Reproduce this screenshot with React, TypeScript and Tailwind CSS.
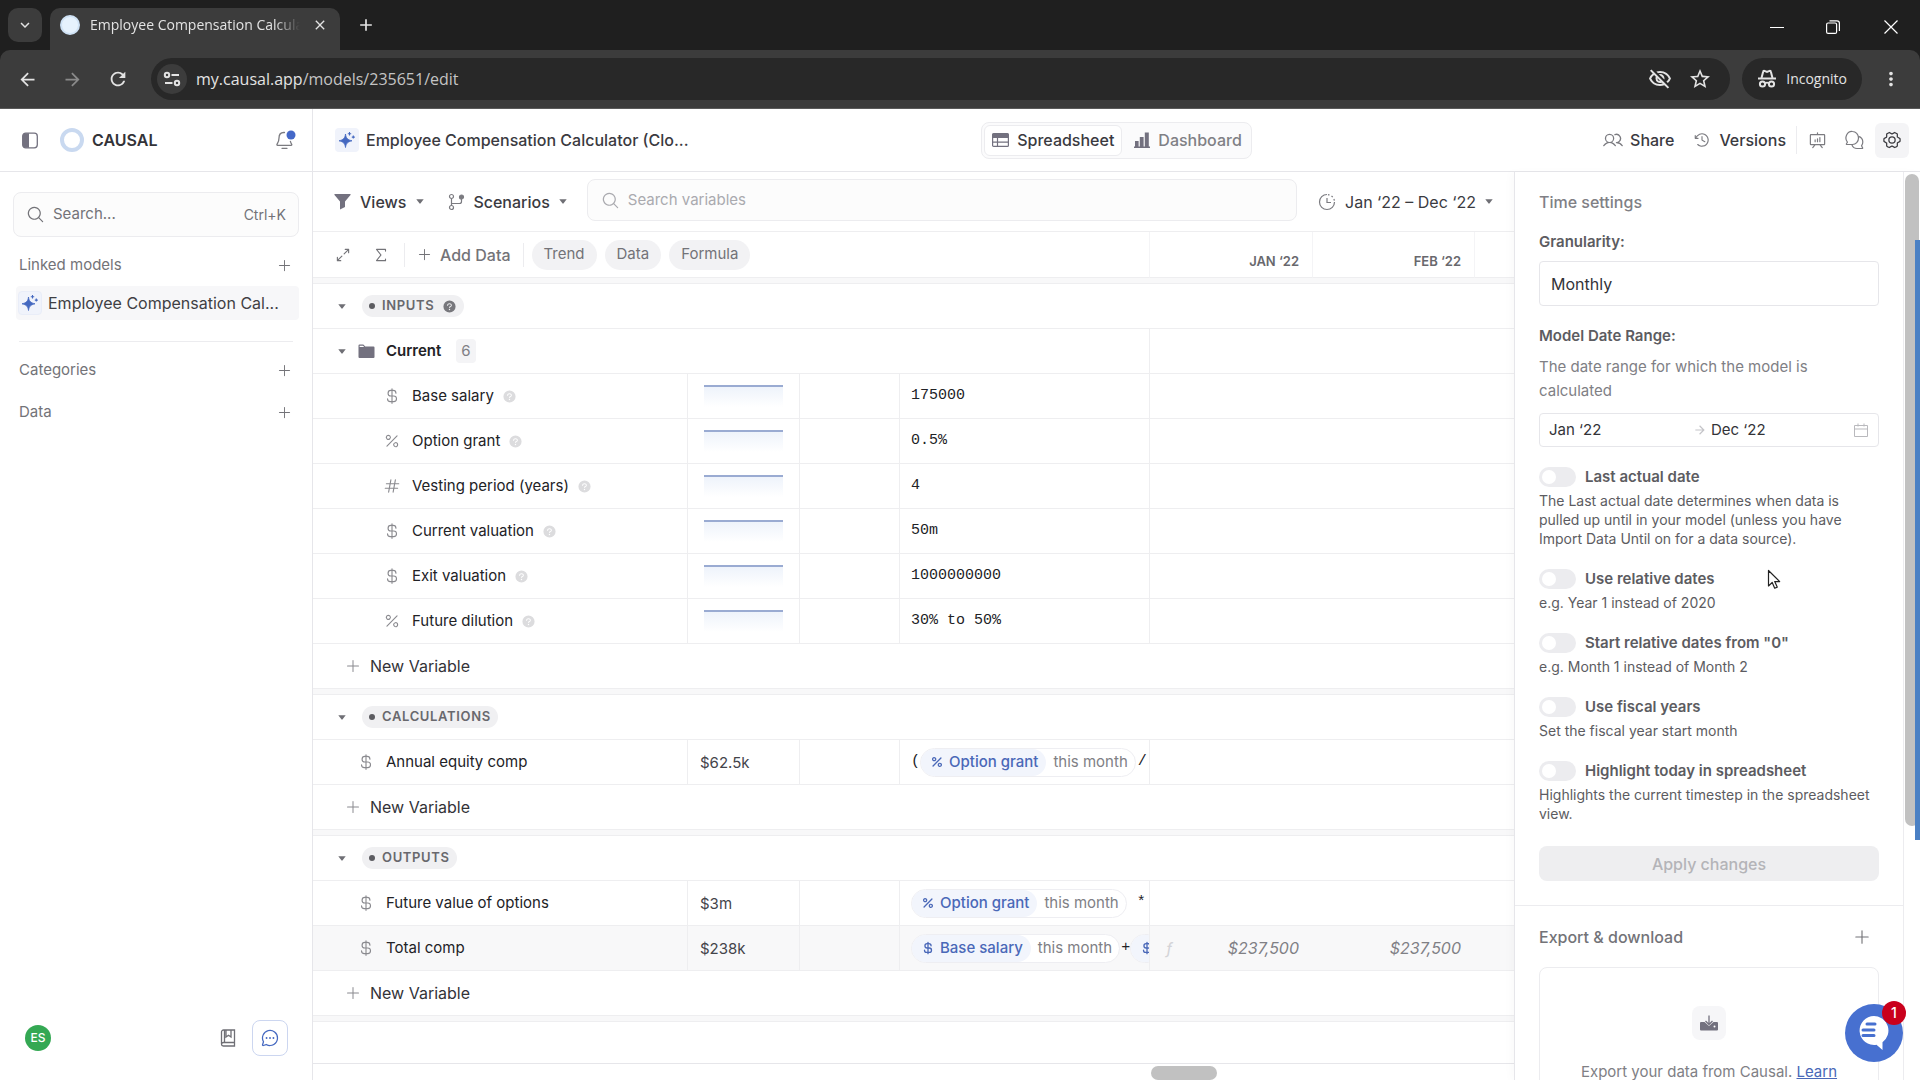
import type { ReactNode } from "react";
import {
  PiArrowsOutSimple,
  PiChatCircleDots,
  PiClockCounterClockwise,
  PiCurrencyDollar,
  PiCurrencyDollarBold,
  PiGearSix,
  PiHash,
  PiMagnifyingGlass,
  PiPercent,
  PiPercentBold,
  PiPlus,
  PiPresentationChart,
  PiQuestionFill,
  PiSigma,
  PiUsers,
} from "react-icons/pi";
import {
  MdArrowBack,
  MdArrowForward,
  MdClose,
  MdKeyboardArrowDown,
  MdMoreVert,
  MdOutlineVisibilityOff,
  MdRefresh,
  MdStarBorder,
  MdAdd,
} from "react-icons/md";

/* ---------- icons ---------- */

function Caret() {
  return (
    <svg width="8" height="5" viewBox="0 0 8 5" className="shrink-0 fill-[#6f6f75]">
      <path d="M0.3 0.3h7.4L4.6 4.3a0.8 0.8 0 0 1-1.2 0z" />
    </svg>
  );
}

function Sparkle() {
  return (
    <svg width="18" height="18" viewBox="0 0 18 18" className="fill-[#4468c0]">
      <path d="M7.500 3c.5 4 2 5.800 6.500 6.800-4.500 1-6 2.700-6.500 6.700C7 12.500 5.500 10.800 1 9.800 5.500 8.800 7 7 7.500 3z" stroke="#4468c0" strokeWidth="0.800" strokeLinejoin="round" />
      <path d="M11.500 1v3.400M9.800 2.700h3.400M15.300 4.600v3M13.800 6.100h3" stroke="#4468c0" strokeWidth="1.100" />
    </svg>
  );
}

function FolderIcon() {
  return (
    <svg width="17" height="15" viewBox="0 0 17 15" className="shrink-0">
      <path d="M0.500 4V1.500a1 1 0 0 1 1-1h3.800l2 2h8.200a1 1 0 0 1 1 1V13a1 1 0 0 1-1 1h-14a1 1 0 0 1-1-1z" fill="#73717f" />
      <path d="M1.600 3V1.700h3.300L6.200 3z" fill="#fff" />
    </svg>
  );
}

function FunnelIcon() {
  return (
    <svg width="17" height="17" viewBox="0 0 17 17" className="shrink-0 fill-[#73717f]">
      <path d="M1 1h15a0.600 0.600 0 0 1 .5 1L11 8.500V14l-5 2.600V8.500L.5 2A.6.6 0 0 1 1 1z" />
    </svg>
  );
}

function BranchIcon() {
  return (
    <svg width="17" height="18" viewBox="0 0 17 18" fill="none" stroke="#7b7b80" strokeWidth="1.200" className="shrink-0">
      <circle cx="3.500" cy="3.500" r="2" />
      <circle cx="3.500" cy="14.500" r="2" />
      <circle cx="13.500" cy="4" r="2" fill="#7b7b80" />
      <path d="M3.500 5.500v7M3.500 10.500h8a2 2 0 0 0 2-2V6" />
    </svg>
  );
}

function ClockIcon() {
  return (
    <svg width="18" height="18" viewBox="0 0 18 18" fill="none" stroke="#7b7b80" strokeWidth="1.200" className="shrink-0">
      <path d="M9 1.500a7.500 7.500 0 1 0 7.500 7.500" />
      <path d="M9 1.500a7.500 7.500 0 0 1 7.500 7.500" strokeDasharray="1.600 2.200" strokeDashoffset="-1" />
      <path d="M9 5v4.500h4" />
    </svg>
  );
}

function ChatsIcon() {
  return (
    <svg width="19" height="20" viewBox="0 0 19 20" fill="none" stroke="currentColor" strokeWidth="1.200" strokeLinejoin="round">
      <path d="M7.500 1.500a6 6.500 0 0 1 0 13H1.800c-.4 0-.6-.4-.4-.7l1-1.600A6 6.500 0 0 1 7.500 1.500z" />
      <path d="M13.300 6.300c2.800.7 4.500 2.900 4.500 5.700 0 1.500-.5 2.700-1.200 3.700l1 2.200c.2.300 0 .6-.4.600H12c-2.300 0-4.300-1.500-5.200-3.900" />
    </svg>
  );
}

function SheetIcon() {
  return (
    <svg width="17" height="14" viewBox="0 0 17 14" className="shrink-0">
      <rect x="0.600" y="0.600" width="15.800" height="12.800" rx="1" fill="none" stroke="#73717f" strokeWidth="1.200" />
      <path d="M0.600 0.600h15.800v4.400H.6z" fill="#73717f" />
      <path d="M5.500 5v8.400M.6 9.200h15.800" stroke="#73717f" strokeWidth="1.200" />
    </svg>
  );
}

function BarsIcon() {
  return (
    <svg width="16" height="16" viewBox="0 0 16 16" className="shrink-0 fill-[#73717f]">
      <path d="M0 14.500h16V16H0zM1 9h3.600v6H1zM5.800 5h3.800v10H5.800zM10.800 0.500h4v14.500h-4z" />
    </svg>
  );
}

function BellIcon() {
  return (
    <svg width="22" height="22" viewBox="0 0 22 22" fill="none" stroke="#7b7b80" strokeWidth="1.300">
      <path d="M10.500 3.500H9.800C6.500 3.500 5 6 5 9c0 3.500-1.200 5-2 6.300-.3.500 0 1 .5 1h13.700c.5 0 .8-.5.5-1-.5-.8-1-1.800-1.300-3" strokeLinecap="round" />
      <path d="M8 19.300h5" strokeLinecap="round" />
      <circle cx="17" cy="6" r="4.500" fill="#4468c8" stroke="none" />
    </svg>
  );
}

function IncognitoIcon() {
  return (
    <svg width="20" height="20" viewBox="0 0 20 20" fill="none" stroke="#e3e3e3" strokeWidth="2">
      <path d="M1 9.500h18" />
      <path d="M4.500 9l1.700-6.500c.1-.6.700-.8 1.200-.6l2.600 1 2.600-1c.5-.2 1.100 0 1.200.6L15.500 9" />
      <circle cx="5.500" cy="15" r="2.600" />
      <circle cx="14.500" cy="15" r="2.600" />
      <path d="M8 14.300c1.200-.8 2.800-.8 4 0" strokeWidth="1.600" />
    </svg>
  );
}

function TuneIcon() {
  return (
    <svg width="18" height="16" viewBox="0 0 18 16" fill="none" stroke="#e3e3e3" strokeWidth="2">
      <circle cx="4" cy="4" r="2.200" />
      <path d="M8.500 4H16M2 12h7.500" />
      <circle cx="14" cy="12" r="2.200" />
    </svg>
  );
}

function NotebookIcon() {
  return (
    <svg width="16" height="18" viewBox="0 0 16 18" fill="none" stroke="#6f6f75" strokeWidth="1.300">
      <path d="M1.500 15V3a2 2 0 0 1 2-2h11v12.500h-11a2 2 0 0 0-2 1.800c0 1 .8 1.700 1.800 1.700h11.200v-3.500" />
      <path d="M6 1v7l2.500-1.800L11 8V1M4.500 13.500V1" />
    </svg>
  );
}

function ExportIcon() {
  return (
    <svg width="18" height="16" viewBox="0 0 18 16">
      <path d="M1 7h3.500l4.500 4 4.500-4H17a1 1 0 0 1 1 1v6.500a1 1 0 0 1-1 1H1a1 1 0 0 1-1-1V8a1 1 0 0 1 1-1z" fill="#73717f" />
      <path d="M9 0.500v8.500M5.500 6L9 9.500 12.500 6" fill="none" stroke="#73717f" strokeWidth="1.300" />
      <circle cx="14.500" cy="11.500" r="1" fill="#fff" />
    </svg>
  );
}

function CalendarIcon() {
  return (
    <svg width="14" height="14" viewBox="0 0 14 14" fill="none" stroke="#b9b9bd" strokeWidth="1">
      <path d="M.5 2.500h13v11H.5zM.5 6h13M4 .5v3M10 .5v3" />
    </svg>
  );
}

/* ---------- browser chrome ---------- */

function BrowserChrome() {
  return (
    <header className="shrink-0 bg-[#1f1f1f] font-['Open_Sans','Noto_Sans',sans-serif] text-[#e3e3e3]">
      <div className="flex h-[50px] items-end">
        <button aria-label="Search tabs" className="mb-2 ml-2 flex h-[34px] w-[34px] items-center justify-center rounded-[10px] bg-[#3c3c3c]">
          <MdKeyboardArrowDown size={18} />
        </button>
        <div className="ml-2 flex h-[42px] w-[290px] items-center rounded-t-[10px] bg-[#3c3c3c] pr-3 pb-2 pl-[10px]">
          <span className="h-5 w-5 shrink-0 rounded-full border-2 border-[#cfe2f5] bg-[#e6f2fd]" />
          <span className="ml-[10px] flex-1 overflow-hidden text-sm whitespace-nowrap [mask-image:linear-gradient(to_right,black_88%,transparent)]">
            Employee Compensation Calculator
          </span>
          <button aria-label="Close tab" className="ml-3">
            <MdClose size={16} />
          </button>
        </div>
        <button aria-label="New tab" className="mb-[15px] ml-4">
          <MdAdd size={20} />
        </button>
        <div className="mb-4 ml-auto flex items-center gap-10 pr-[22px]">
          <button aria-label="Minimize">
            <svg width="14" height="14" viewBox="0 0 14 14" stroke="#fff"><path d="M0 7.500h14" /></svg>
          </button>
          <button aria-label="Restore" className="ml-[2px]">
            <svg width="14" height="14" viewBox="0 0 14 14" fill="none" stroke="#fff" strokeWidth="1.200">
              <rect x="0.600" y="3" width="10" height="10.400" rx="1.500" />
              <path d="M3.500 .8h7.500a2.400 2.400 0 0 1 2.400 2.400V11" />
            </svg>
          </button>
          <button aria-label="Close window" className="ml-1">
            <svg width="14" height="14" viewBox="0 0 14 14" stroke="#fff" strokeWidth="1.200"><path d="M.5.5l13 13M13.500.5l-13 13" /></svg>
          </button>
        </div>
      </div>
      <div className="flex h-[59px] items-center rounded-t-[10px] border-b border-[#5a5a5a] bg-[#3c3c3c] pr-[18px] pl-[17px]">
        <button aria-label="Back"><MdArrowBack size={21} /></button>
        <button aria-label="Forward" className="ml-6 text-[#8a8a8a]"><MdArrowForward size={21} /></button>
        <button aria-label="Reload" className="ml-6"><MdRefresh size={22} /></button>
        <div className="ml-[22px] flex h-[42px] flex-1 items-center rounded-full bg-[#282828] pr-[18px] pl-[6px]">
          <span className="flex h-[30px] w-[30px] items-center justify-center rounded-full bg-[#3c3c3c]"><TuneIcon /></span>
          <span className="ml-[9px] flex-1 text-base">
            my.causal.app<span className="text-[#c4c4c4]">/models/235651/edit</span>
          </span>
          <button aria-label="Tracking protection"><MdOutlineVisibilityOff size={24} /></button>
          <button aria-label="Bookmark" className="ml-4"><MdStarBorder size={24} /></button>
        </div>
        <div className="ml-3 flex h-[42px] items-center gap-[9px] rounded-full bg-[#282828] px-[15px] text-sm">
          <IncognitoIcon />
          <span>Incognito</span>
        </div>
        <button aria-label="Menu" className="ml-[18px]"><MdMoreVert size={22} /></button>
      </div>
    </header>
  );
}

/* ---------- sidebar ---------- */

function SectionHead({ label }: { label: string }) {
  return (
    <div className="flex h-6 items-center justify-between pr-[7px] pl-[6px] text-[15px] text-[#737378]">
      {label}
      <button aria-label={`Add to ${label}`}><PiPlus size={15} /></button>
    </div>
  );
}

function Sidebar() {
  return (
    <aside className="flex w-[313px] shrink-0 flex-col border-r border-[#e6e6ea]">
      <div className="flex h-[63px] items-center border-b border-[#e6e6ea] pr-4 pl-[22px]">
        <button aria-label="Toggle sidebar">
          <svg width="16" height="17" viewBox="0 0 16 17" fill="none">
            <rect x="0.700" y="1.200" width="14.600" height="14.600" rx="3" stroke="#73717f" strokeWidth="1.300" />
            <path d="M7 1.200v14.600H3.500a2.800 2.800 0 0 1-2.800-2.800V4a2.800 2.800 0 0 1 2.800-2.800z" fill="#73717f" />
          </svg>
        </button>
        <span className="ml-[22px] h-6 w-6 rounded-full border-4 border-[#c9d9f0]" />
        <span className="ml-2 text-base font-semibold text-[#333338]">CAUSAL</span>
        <button aria-label="Notifications" className="ml-auto"><BellIcon /></button>
      </div>
      <div className="flex flex-1 flex-col px-[13px] pt-5 pb-6">
        <label className="flex h-[45px] items-center rounded-lg border border-[#ececef] bg-[#fcfcfc] px-3 text-[#737378]">
          <PiMagnifyingGlass size={19} />
          <input aria-label="Search" placeholder="Search..." className="ml-2 min-w-0 flex-1 bg-transparent text-[15px] outline-none placeholder:text-[#737378]" />
          <kbd className="font-[Inter,sans-serif] text-sm">Ctrl+K</kbd>
        </label>
        <div className="mt-4"><SectionHead label="Linked models" /></div>
        <a href="#model" className="mt-[9px] ml-[3px] flex h-[34px] items-center rounded bg-[#f7f7f9] px-[2px] text-base text-[#3f3f44]">
          <span className="flex h-6 w-6 items-center justify-center rounded border border-[#e9edf8] bg-[#f0f3fb]"><Sparkle /></span>
          <span className="ml-[6px]">Employee Compensation Cal...</span>
        </a>
        <hr className="mx-[6px] mt-[21px] border-[#ececef]" />
        <div className="mt-4"><SectionHead label="Categories" /></div>
        <div className="mt-[18px]"><SectionHead label="Data" /></div>
        <div className="mt-auto flex items-center pr-[11px] pl-3">
          <span className="flex h-[26px] w-[26px] items-center justify-center rounded-full bg-[#34a853] text-xs font-medium text-white">ES</span>
          <button aria-label="Guide" className="ml-auto"><NotebookIcon /></button>
          <button aria-label="Chat" className="ml-4 flex h-9 w-9 items-center justify-center rounded-lg border border-[#ccd6f0] text-[#4468c0]">
            <PiChatCircleDots size={20} />
          </button>
        </div>
      </div>
    </aside>
  );
}

/* ---------- top bar ---------- */

function TopBar() {
  return (
    <div className="flex h-[63px] shrink-0 items-center border-b border-[#e6e6ea] px-[11px] text-base text-[#3a3a3f]">
      <div className="flex flex-1 items-center">
        <span className="ml-[11px] flex h-6 w-6 items-center justify-center rounded bg-[#f0f3fb]"><Sparkle /></span>
        <span className="ml-[7px] font-medium">Employee Compensation Calculator (Clo...</span>
      </div>
      <div className="flex h-[37px] items-center rounded-lg border border-[#ececef] bg-[#fbfbfc] px-[2px] font-medium">
        <button className="flex h-[31px] items-center gap-2 rounded-md border border-[#ececef] bg-white px-[7px]"><SheetIcon />Spreadsheet</button>
        <button className="flex items-center gap-2 pr-[7px] pl-3 text-[#808085]"><BarsIcon />Dashboard</button>
      </div>
      <div className="flex flex-1 items-center justify-end">
        <button className="flex items-center gap-[7px]"><PiUsers size={20} className="text-[#7b7b80]" /><span className="font-medium">Share</span></button>
        <button className="ml-[19px] flex items-center gap-2"><PiClockCounterClockwise size={18} className="text-[#7b7b80]" /><span className="font-medium">Versions</span></button>
        <span className="ml-[10px] h-7 w-px bg-[#ececef]" />
        <button aria-label="Present" className="ml-[11px] text-[#7b7b80]"><PiPresentationChart size={19} /></button>
        <button aria-label="Comments" className="ml-[18px] text-[#7b7b80]"><ChatsIcon /></button>
        <button aria-label="Settings" className="ml-[11px] flex h-[35px] w-[34px] items-center justify-center rounded-md bg-[#f4f4f6]"><PiGearSix size={20} /></button>
      </div>
    </div>
  );
}

/* ---------- sheet ---------- */

type Kind = "$" | "%" | "#";

function KindIcon({ kind }: { kind: Kind }) {
  if (kind === "$") return <PiCurrencyDollar size={18} className="shrink-0" />;
  if (kind === "%") return <PiPercent size={18} className="shrink-0" />;
  return <PiHash size={18} className="shrink-0" />;
}

const td = "h-[45px] border-b border-[#eeeef0] p-0";
const tdLine = "h-[45px] border-r border-b border-[#eeeef0] p-0";

function Spark() {
  return (
    <svg width="79" height="22" viewBox="0 0 79 22" className="ml-4">
      <defs>
        <linearGradient id="spark" x1="0" y1="0" x2="0" y2="1">
          <stop offset="0" stopColor="#eef3fb" />
          <stop offset="1" stopColor="#ffffff" />
        </linearGradient>
      </defs>
      <rect y="2" width="79" height="20" fill="url(#spark)" />
      <rect width="79" height="2" fill="#9aabd2" />
    </svg>
  );
}

function Chip({ kind, name }: { kind: Kind; name?: string }) {
  return (
    <span className="flex h-[29px] shrink-0 items-center rounded-full border border-[#eeeef2] bg-white font-[Inter,sans-serif] text-[15px]">
      <span className="flex h-full items-center gap-[5px] rounded-full bg-[#f2f5fc] pr-2 pl-[9px] font-medium text-[#4a68b8]">
        {kind === "$" ? <PiCurrencyDollarBold size={14} /> : <PiPercentBold size={14} />}
        {name}
      </span>
      {name && <span className="px-[7px] text-[#808085]">this month</span>}
    </span>
  );
}

interface RowProps {
  kind: Kind;
  name: string;
  nested?: boolean;
  total?: string;
  formula: ReactNode;
  cells?: [string, string];
}

function VariableRow({ kind, name, nested, total, formula, cells }: RowProps) {
  return (
    <tr className={cells ? "bg-[#f8f8f9]" : ""}>
      <td className={tdLine}>
        <div className={nested ? "flex items-center pl-[70px]" : "flex items-center pl-11"}>
          <span className="text-[#8a8a8f]"><KindIcon kind={kind} /></span>
          <span className="ml-[11px] text-[15px]">{name}</span>
          {nested && <PiQuestionFill size={15} className="ml-2 text-[#dcdcde]" />}
        </div>
      </td>
      <td className={tdLine}>{total ? <span className="pl-3 text-[15px] text-[#44444a]">{total}</span> : <Spark />}</td>
      <td className={tdLine} />
      <td className={tdLine}>
        <div className="flex items-center overflow-hidden pl-[11px] font-['Liberation_Mono',monospace] text-[15px] whitespace-nowrap">
          {formula}
        </div>
      </td>
      <td className={td}>
        {cells && (
          <div className="flex items-center justify-between pr-[14px] pl-4 text-base text-[#808085] italic">
            <span className="text-[#d4d4d8]">ƒ</span>
            {cells[0]}
          </div>
        )}
      </td>
      <td className={td}>{cells && <div className="pr-[14px] text-right text-base text-[#808085] italic">{cells[1]}</div>}</td>
      <td className={td} />
    </tr>
  );
}

function GroupRow({ label, help }: { label: string; help?: boolean }) {
  return (
    <tr>
      <td colSpan={7} className={td}>
        <div className="flex items-center pl-[25px]">
          <Caret />
          <span className="ml-4 flex h-[22px] items-center rounded-full bg-[#f0f0f2] px-[7px] text-[13px] font-semibold tracking-wider text-[#68686d]">
            <span className="mr-[7px] h-[6px] w-[6px] rounded-full bg-[#5c5c61]" />
            {label}
            {help && <PiQuestionFill size={15} className="ml-2 text-[#77777c]" />}
          </span>
        </div>
      </td>
    </tr>
  );
}

function NewRow() {
  return (
    <tr>
      <td colSpan={7} className={td}>
        <button className="flex items-center pl-8 text-base text-[#333338]">
          <PiPlus size={16} className="text-[#8a8a8f]" />
          <span className="ml-[9px]">New Variable</span>
        </button>
      </td>
    </tr>
  );
}

function GapRow() {
  return (
    <tr>
      <td colSpan={7} className="h-[6px] border-b border-[#eeeef0] bg-[#f8f8f9] p-0" />
    </tr>
  );
}

const inputs: RowProps[] = [
  { kind: "$", name: "Base salary", formula: "175000" },
  { kind: "%", name: "Option grant", formula: "0.5%" },
  { kind: "#", name: "Vesting period (years)", formula: "4" },
  { kind: "$", name: "Current valuation", formula: "50m" },
  { kind: "$", name: "Exit valuation", formula: "1000000000" },
  { kind: "%", name: "Future dilution", formula: "30% to 50%" },
];

const monthHead = "border-r border-b border-r-[#f4f4f6] border-b-[#eeeef0] p-0 pt-[14px] pr-[13px] text-right text-[13px] font-semibold text-[#68686d]";

function Sheet() {
  return (
    <div className="min-h-0 flex-1 overflow-hidden">
      <table className="w-full table-fixed border-separate border-spacing-0 text-left text-[#222226]">
        <colgroup>
          <col className="w-[375px]" />
          <col className="w-28" />
          <col className="w-[100px]" />
          <col className="w-[250px]" />
          <col className="w-[163px]" />
          <col className="w-[162px]" />
          <col />
        </colgroup>
        <thead>
          <tr>
            <th colSpan={4} className="h-[46px] border-r border-b border-r-[#f4f4f6] border-b-[#eeeef0] p-0 font-normal">
              <div className="flex items-center pl-[21px] text-base text-[#737378]">
                <button aria-label="Expand all"><PiArrowsOutSimple size={18} /></button>
                <button aria-label="Totals" className="ml-5"><PiSigma size={18} /></button>
                <span className="ml-[14px] h-6 w-px bg-[#ececef]" />
                <button className="ml-3 flex items-center gap-2"><PiPlus size={15} /><span className="font-medium">Add Data</span></button>
                <span className="ml-3 h-6 w-px bg-[#ececef]" />
                <span className="ml-2 flex gap-2 text-[15px]">
                  <button className="h-[30px] rounded-full bg-[#f2f2f4] px-3">Trend</button>
                  <button className="h-[30px] rounded-full bg-[#f2f2f4] px-3">Data</button>
                  <button className="h-[30px] rounded-full bg-[#f2f2f4] px-3">Formula</button>
                </span>
              </div>
            </th>
            <th className={monthHead}>JAN ‘22</th>
            <th className={monthHead}>FEB ‘22</th>
            <th className="border-b border-[#eeeef0] p-0" />
          </tr>
        </thead>
        <tbody>
          <GapRow />
          <GroupRow label="INPUTS" help />
          <tr>
            <td colSpan={4} className={tdLine}>
              <div className="flex items-center pl-[25px]">
                <Caret />
                <span className="ml-3"><FolderIcon /></span>
                <span className="ml-[11px] text-[15px] font-semibold">Current</span>
                <span className="ml-[15px] rounded bg-[#f4f4f6] px-[5px] py-px text-[15px] text-[#808085]">6</span>
              </div>
            </td>
            <td colSpan={3} className={td} />
          </tr>
          {inputs.map((row) => (
            <VariableRow key={row.name} {...row} nested />
          ))}
          <NewRow />
          <GapRow />
          <GroupRow label="CALCULATIONS" />
          <VariableRow
            kind="$"
            name="Annual equity comp"
            total="$62.5k"
            formula={<><span>(</span><Chip kind="%" name="Option grant" /><span className="ml-[2px]">/</span></>}
          />
          <NewRow />
          <GapRow />
          <GroupRow label="OUTPUTS" />
          <VariableRow
            kind="$"
            name="Future value of options"
            total="$3m"
            formula={<><Chip kind="%" name="Option grant" /><span className="ml-[10px]">*</span></>}
          />
          <VariableRow
            kind="$"
            name="Total comp"
            total="$238k"
            cells={["$237,500", "$237,500"]}
            formula={<><Chip kind="$" name="Base salary" /><span className="ml-px">+</span><Chip kind="$" /></>}
          />
          <NewRow />
          <GapRow />
          <tr>
            <td colSpan={7} className="h-[42px] border-b border-[#e6e6ea] p-0" />
          </tr>
        </tbody>
      </table>
    </div>
  );
}

function FilterBar() {
  return (
    <div className="flex h-[60px] shrink-0 items-center border-b border-[#eeeef0] pr-[21px] pl-[21px] text-base text-[#3a3a3f]">
      <button className="flex items-center"><FunnelIcon /><span className="mr-[10px] ml-[9px] font-medium">Views</span><Caret /></button>
      <button className="ml-6 flex items-center"><BranchIcon /><span className="mr-[9px] ml-2 font-medium">Scenarios</span><Caret /></button>
      <label className="mb-[3px] ml-5 flex h-[42px] flex-1 items-center rounded-lg border border-[#ececef] bg-[#fcfcfc] px-[13px] text-[#aaaaaf]">
        <PiMagnifyingGlass size={19} />
        <input aria-label="Search variables" placeholder="Search variables" className="ml-2 min-w-0 flex-1 bg-transparent text-[15px] outline-none placeholder:text-[#aaaaaf]" />
      </label>
      <button className="ml-[21px] flex items-center"><ClockIcon /><span className="mr-[9px] ml-[9px]">Jan ‘22 – Dec ‘22</span><Caret /></button>
    </div>
  );
}

/* ---------- settings panel ---------- */

const toggles = [
  { id: "actual", label: "Last actual date", text: "The Last actual date determines when data is pulled up until in your model (unless you have Import Data Until on for a data source)." },
  { id: "relative", label: "Use relative dates", text: "e.g. Year 1 instead of 2020" },
  { id: "zero", label: 'Start relative dates from "0"', text: "e.g. Month 1 instead of Month 2" },
  { id: "fiscal", label: "Use fiscal years", text: "Set the fiscal year start month" },
  { id: "today", label: "Highlight today in spreadsheet", text: "Highlights the current timestep in the spreadsheet view." },
];

function SettingsPanel() {
  return (
    <aside className="flex w-[406px] shrink-0 overflow-hidden border-l border-[#e6e6ea] shadow-[-4px_0_8px_rgba(0,0,0,0.02)]">
      <div className="flex min-w-0 flex-1 flex-col overflow-hidden">
        <section className="shrink-0 border-b border-[#ececef] px-6 pt-[18px] pb-6 text-[#5c5c61]">
          <h2 className="text-base leading-6 font-medium text-[#808085]">Time settings</h2>
          <label htmlFor="granularity" className="mt-4 block text-[15px] leading-6 font-semibold">Granularity:</label>
          <select id="granularity" className="mt-[7px] block h-[45px] w-full appearance-none rounded border border-[#e6e6ea] bg-white px-[11px] text-base text-[#333338]">
            <option>Monthly</option>
          </select>
          <h3 className="mt-[18px] text-[15px] leading-6 font-semibold">Model Date Range:</h3>
          <p className="mt-[7px] text-[15px] leading-6 text-[#808085]">The date range for which the model is calculated</p>
          <div className="mt-[10px] flex h-[34px] items-center rounded border border-[#e6e6ea] pr-[10px] pl-[9px] text-[15px] text-[#333338]">
            <input aria-label="Start" defaultValue="Jan ‘22" className="w-[144px] min-w-0 outline-none" />
            <MdArrowForward size={14} className="shrink-0 text-[#c4c4c8]" />
            <input aria-label="End" defaultValue="Dec ‘22" className="ml-1 min-w-0 flex-1 outline-none" />
            <CalendarIcon />
          </div>
          <div className="mt-[18px] flex flex-col gap-[19px]">
            {toggles.map((t) => (
              <div key={t.id}>
                <div className="flex h-6 items-center">
                  <input
                    id={t.id}
                    type="checkbox"
                    role="switch"
                    className="flex h-5 w-[37px] appearance-none items-center rounded-full bg-[#ececef] p-[3px] before:h-[14px] before:w-[14px] before:rounded-full before:bg-white"
                  />
                  <label htmlFor={t.id} className="ml-[9px] text-[15px] font-semibold">{t.label}</label>
                </div>
                <p className="mt-[2px] text-sm leading-[19px]">{t.text}</p>
              </div>
            ))}
          </div>
          <button disabled className="mt-[23px] h-[35px] w-full rounded-lg bg-[#eeeef0] text-base font-medium text-[#b4b4b8]">Apply changes</button>
        </section>
        <section className="shrink-0 px-6 pt-[19px]">
          <div className="flex items-center justify-between pr-2">
            <h2 className="text-base leading-6 font-medium text-[#737378]">Export &amp; download</h2>
            <button aria-label="Add export" className="text-[#737378]"><PiPlus size={18} /></button>
          </div>
          <div className="mt-[18px] flex flex-col items-center rounded-lg border border-[#ececef] px-8 pt-[38px] pb-10">
            <span className="flex h-[34px] w-[34px] items-center justify-center rounded-lg bg-[#f6f6f8]"><ExportIcon /></span>
            <p className="mt-5 text-center text-[15px] leading-6 text-[#808085]">
              Export your data from Causal. <a href="#learn" className="text-[#4a68b8] underline">Learn more</a>
            </p>
          </div>
        </section>
      </div>
      <div className="flex w-[17px] shrink-0 flex-col border-l border-[#ececef] px-px pt-[2px]">
        <div className="h-[72%] rounded-full bg-[#c1c1c1]" />
      </div>
    </aside>
  );
}

/* ---------- page ---------- */

export default function App() {
  return (
    <div className="relative flex h-screen flex-col overflow-hidden bg-white font-[Inter,'Liberation_Sans',sans-serif]">
      <BrowserChrome />
      <div className="flex min-h-0 flex-1">
        <Sidebar />
        <div className="flex min-w-0 flex-1 flex-col">
          <TopBar />
          <div className="flex min-h-0 flex-1">
            <main className="flex min-w-0 flex-1 flex-col">
              <FilterBar />
              <Sheet />
              <div className="flex h-[15px] shrink-0 items-center pl-[838px]">
                <div className="h-[14px] w-[66px] rounded-full bg-[#c1c1c1]" />
              </div>
            </main>
            <SettingsPanel />
          </div>
        </div>
      </div>

      <div className="absolute top-60 right-0 h-[600px] w-[5px] bg-[#4a80c4]" />
      <svg width="14" height="21" viewBox="0 0 14 21" className="absolute top-[569px] left-[1767px]">
        <path d="M1.500 1.500v15.500l3.700-3.500 2.500 5.700 2.500-1.100-2.500-5.500h5z" fill="#fff" stroke="#222" strokeWidth="1.200" strokeLinejoin="round" />
      </svg>
      <button aria-label="Open messenger" className="absolute right-[17px] bottom-[18px] flex h-[58px] w-[58px] items-center justify-center rounded-full bg-[#4770d0]">
        <svg width="32" height="36" viewBox="0 0 32 36">
          <path d="M16 1a14.500 14.500 0 0 1 8.500 26.200V35l-6-5.200A14.500 14.500 0 1 1 16 1z" fill="#fff" />
          <path d="M9 9h8M5 15h11M5 20.500h11" stroke="#4770d0" strokeWidth="3" strokeLinecap="round" />
        </svg>
        <span className="absolute -top-[3px] -right-[3px] flex h-6 w-6 items-center justify-center rounded-full bg-[#c9001c] text-sm font-medium text-white">1</span>
      </button>
    </div>
  );
}
